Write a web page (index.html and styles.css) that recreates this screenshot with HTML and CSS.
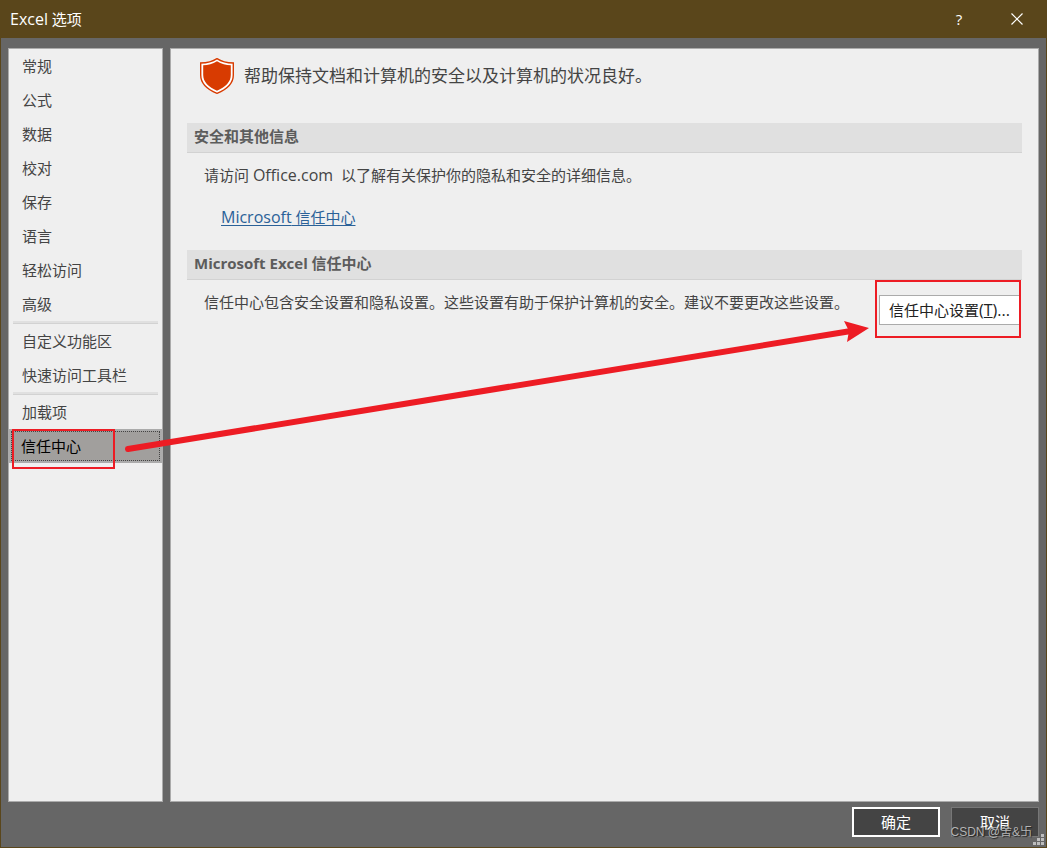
FILE: index.html
```html
<!DOCTYPE html>
<html lang="zh-CN">
<head>
<meta charset="utf-8">
<title>Excel 选项</title>
<link rel="stylesheet" href="styles.css">
</head>
<body>
<div class="dialog">
  <header class="titlebar">
    <h1 class="title"><span class="latin">Excel</span> 选项</h1>
    <button class="caption-btn" type="button" aria-label="帮助">?</button>
    <button class="caption-btn" type="button" aria-label="关闭">
      <svg width="12" height="12" viewBox="0 0 12 12"><path d="M.5.5l11 11M11.5.5l-11 11" stroke="#fff" stroke-width="1.200" fill="none"/></svg>
    </button>
  </header>
  <div class="body">
    <nav class="sidebar">
      <button class="nav-item" type="button">常规</button>
      <button class="nav-item" type="button">公式</button>
      <button class="nav-item" type="button">数据</button>
      <button class="nav-item" type="button">校对</button>
      <button class="nav-item" type="button">保存</button>
      <button class="nav-item" type="button">语言</button>
      <button class="nav-item" type="button">轻松访问</button>
      <button class="nav-item" type="button">高级</button>
      <hr class="nav-sep">
      <button class="nav-item" type="button">自定义功能区</button>
      <button class="nav-item" type="button">快速访问工具栏</button>
      <hr class="nav-sep">
      <button class="nav-item" type="button">加载项</button>
      <button class="nav-item selected" type="button">信任中心</button>
    </nav>
    <main class="content">
      <div class="intro">
        <svg class="shield" width="34" height="36" viewBox="0 0 34 36">
          <path d="M17 .7C12.500 3.700 7 5 .7 5V17C.7 25.500 7.500 31.500 17 35.300C26.500 31.500 33.300 25.500 33.300 17V5C27 5 21.500 3.700 17 .7Z" fill="#fff" stroke="#d83b01" stroke-width="1.400"/>
          <path d="M17 3.300C12.700 6 8 7.200 3.200 7.300V17C3.200 24 8.700 29.200 17 32.700C25.300 29.200 30.800 24 30.800 17V7.300C26 7.200 21.300 6 17 3.300Z" fill="#d83b01"/>
        </svg>
        <p class="intro-text">帮助保持文档和计算机的安全以及计算机的状况良好。</p>
      </div>
      <section>
        <h2 class="section-title">安全和其他信息</h2>
        <p class="section-text">请访问 <span class="latin">Office.com</span>&nbsp; 以了解有关保护你的隐私和安全的详细信息。</p>
        <p class="link-row"><a class="link" href="#"><span class="latin">Microsoft</span> 信任中心</a></p>
      </section>
      <section>
        <h2 class="section-title">Microsoft Excel 信任中心</h2>
        <div class="settings-row">
          <p class="section-text">信任中心包含安全设置和隐私设置。这些设置有助于保护计算机的安全。建议不要更改这些设置。</p>
          <div class="marked"><button class="settings-btn" type="button">信任中心设置<span class="latin">(<u>T</u>)...</span></button></div>
        </div>
      </section>
    </main>
  </div>
  <footer class="footer">
    <button class="btn primary" type="button">确定</button>
    <button class="btn" type="button">取消</button>
    <span class="watermark">CSDN @舍&amp;卐</span>
    <svg class="grip" width="11" height="11" viewBox="0 0 11 11" fill="#bdbdbd"><path d="M8 0h3v3H8zM4 4h3v3H4zM8 4h3v3H8zM0 8h3v3H0zM4 8h3v3H4zM8 8h3v3H8z"/></svg>
  </footer>
  <svg class="arrow" width="750" height="140" viewBox="0 0 750 140">
    <path d="M9 129L732 11" stroke="#ed1c24" stroke-width="6" stroke-linecap="round"/>
    <path d="M750 8L725 1L730 11L728 22Z" fill="#ed1c24"/>
  </svg>
</div>
</body>
</html>
```

FILE: styles.css
```css
*, *::after { box-sizing: border-box; }
body, h1, h2, p { margin: 0; }
body, button {
  font-family: "Open Sans", "Noto Sans CJK SC", sans-serif;
  font-size: 15px;
  line-height: 20px;
}
.latin { font-size: 16px; line-height: 16px; }
.dialog {
  position: relative;
  display: flex;
  flex-direction: column;
  min-height: 100vh;
  background: #666;
  border: 1px solid #5a461b;
  border-top: 0;
  color: #444;
}
.titlebar {
  display: flex;
  align-items: center;
  height: 38px;
  padding-left: 9px;
  background: #5a461b;
  color: #fff;
}
.title { flex: 1; font-size: 15px; font-weight: 400; }
.caption-btn {
  display: flex;
  align-items: center;
  justify-content: center;
  width: 58px;
  height: 38px;
  padding: 0;
  border: 0;
  background: none;
  color: #fff;
}
.body { flex: 1; display: flex; gap: 7px; padding: 10px 7px 0; }
.sidebar, .content { background: #efefef; border: 1px solid #ababab; }
.sidebar { flex: none; width: 155px; }
.nav-item {
  display: block;
  width: 100%;
  height: 34px;
  padding: 0 13px;
  border: 0;
  background: none;
  color: #444;
  text-align: left;
}
.nav-sep {
  height: 3px;
  margin: 0 4px;
  border: 0;
  border-bottom: 1px solid #d2d2d2;
  background: #e0e0e0;
}
.selected {
  position: relative;
  padding: 0 10px;
  border: 2px solid #ababab;
  background: #a19f9d;
  color: #000;
  outline: 1px dotted #444;
  outline-offset: -3px;
}
.selected::after {
  content: "";
  position: absolute;
  left: 1px;
  top: -2px;
  width: 103px;
  height: 40px;
  border: 2px solid #ed1c24;
}
.content { flex: 1; min-width: 0; padding: 9px 16px; }
.intro { display: flex; align-items: center; gap: 10px; height: 36px; margin: 0 0 29px 13px; }
.shield { flex: none; }
.intro-text { font-size: 17px; line-height: 24px; }
.section-title {
  height: 30px;
  padding: 3px 7px;
  border-bottom: 1px solid #d2d2d2;
  background: #e0e0e0;
  color: #5c5c5c;
  font-size: 15px;
  font-weight: 700;
}
.section-text { padding: 12px 0 0 17px; }
.link-row { padding: 22px 34px 23px; }
.link { color: #2a6198; text-underline-offset: 2px; }
.settings-row { display: flex; justify-content: space-between; align-items: flex-start; }
.marked {
  flex: none;
  margin-right: 1px;
  padding: 13px 0 11px 2px;
  border: 2px solid #ed1c24;
}
.settings-btn {
  display: block;
  width: 140px;
  height: 30px;
  padding: 0;
  border: 1px solid #ababab;
  border-right: 0;
  background: #fff;
  color: #222;
}
.footer {
  position: relative;
  display: flex;
  justify-content: flex-end;
  gap: 11px;
  padding: 5px 7px 10px;
}
.btn {
  width: 88px;
  height: 30px;
  padding: 0;
  border: 1px solid #777;
  background: #444;
  color: #fff;
}
.primary { border: 2px solid #fff; }
.watermark {
  position: absolute;
  right: 14px;
  bottom: 5px;
  color: #b4b4b4;
  font-family: "Liberation Sans", "Noto Sans CJK SC", sans-serif;
  font-size: 12px;
  text-shadow: 1px 1px 1px #222;
}
.grip { position: absolute; right: 2px; bottom: 2px; }
.arrow { position: absolute; left: 118px; top: 320px; pointer-events: none; }
```
